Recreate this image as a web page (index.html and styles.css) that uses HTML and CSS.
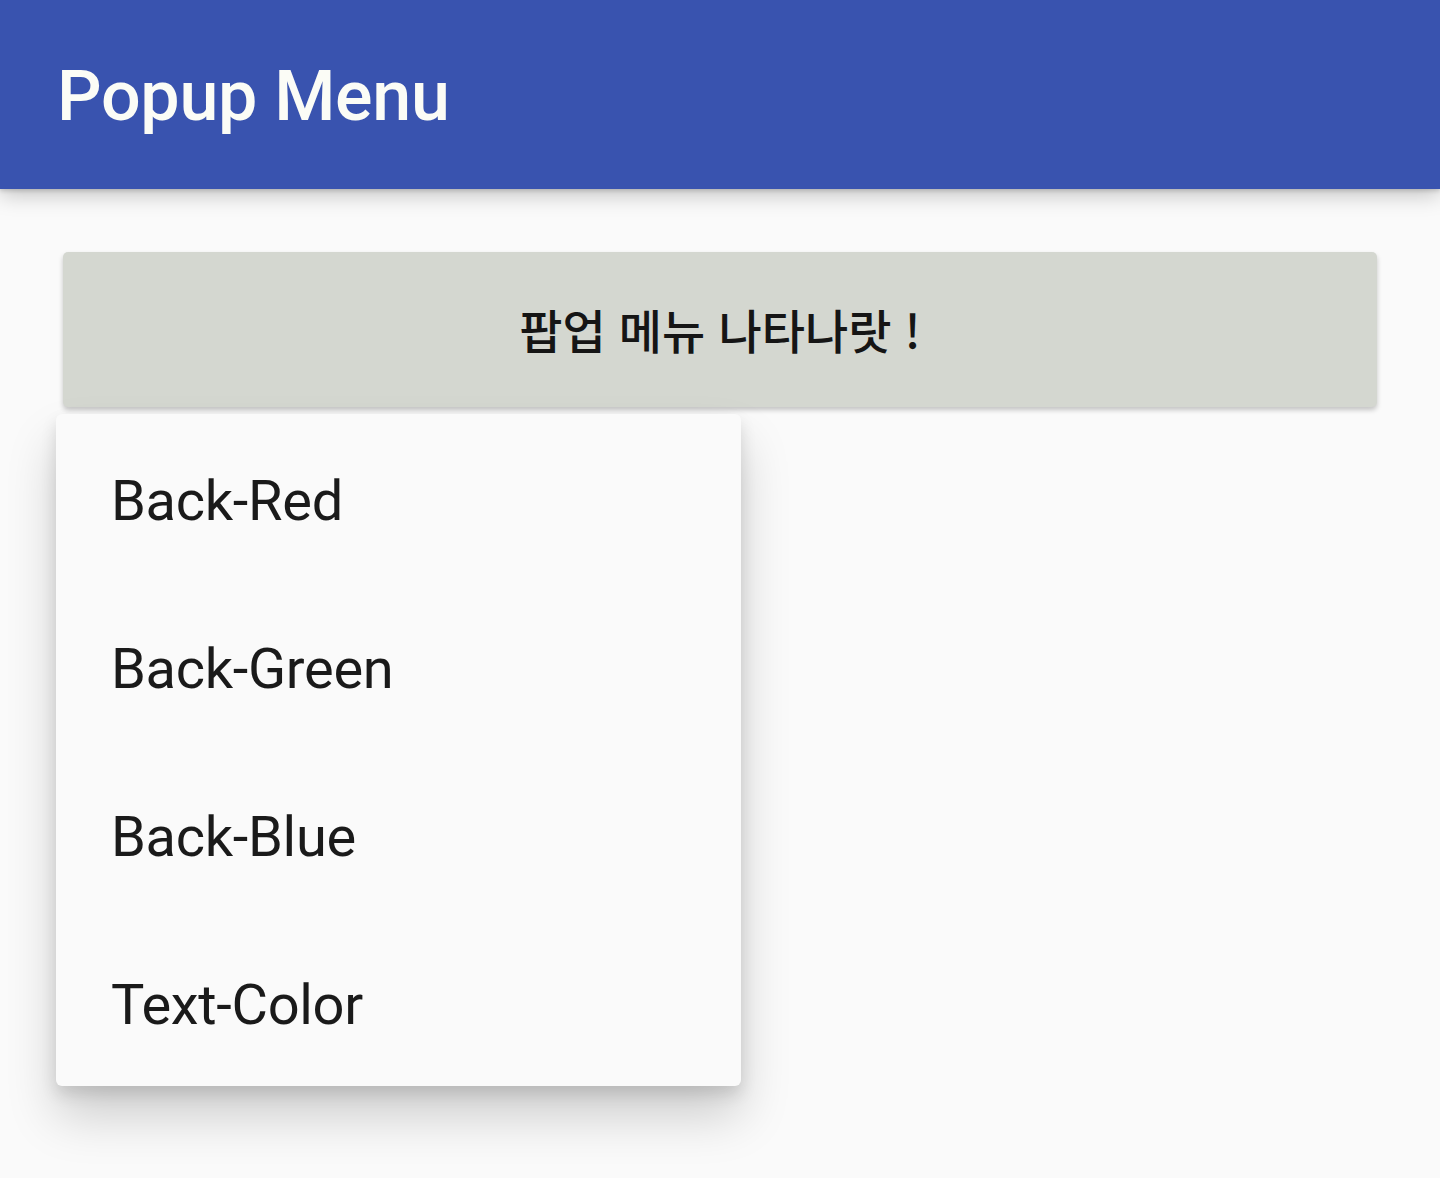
FILE: index.html
```html
<!DOCTYPE html>
<html lang="ko">
<head>
<meta charset="utf-8">
<link rel="stylesheet" href="styles.css">
</head>
<body>
<header class="appbar"><h1 class="title">Popup Menu</h1></header>
<main class="content">
  <div class="btn">팝업 메뉴 나타나랏 !</div>
  <ul class="menu">
    <li class="item">Back-Red</li>
    <li class="item">Back-Green</li>
    <li class="item">Back-Blue</li>
    <li class="item">Text-Color</li>
  </ul>
</main>
</body>
</html>
```
FILE: styles.css
```css
html, body { margin: 0; padding: 0; }
body {
  width: 1440px;
  height: 1178px;
  background: #fafafa;
  font-family: Roboto, "Noto Sans CJK KR", sans-serif;
  overflow: hidden;
}
.appbar {
  height: 189px;
  background: #3953af;
  display: flex;
  align-items: center;
  padding-left: 57px;
  box-shadow: 0 6px 20px rgba(0,0,0,0.22), 0 2px 4px rgba(0,0,0,0.15);
  position: relative;
  z-index: 2;
}
.title {
  margin: 0;
  margin-top: 2px;
  color: #fbfcf6;
  font-size: 70px;
  font-weight: 500;
  letter-spacing: -0.3px;
}
.content {
  padding: 63px 63px 0 56px;
  display: flex;
  flex-direction: column;
}
.btn {
  margin-left: 7px;
  height: 155px;
  background: #d4d7d0;
  border-radius: 5px;
  box-shadow: 0 3px 5px rgba(0,0,0,0.22);
  display: flex;
  align-items: center;
  justify-content: center;
  font-family: "Noto Sans CJK KR", sans-serif;
  font-size: 47px;
  font-weight: 500;
  color: #151515;
  padding-bottom: 2px;
  box-sizing: border-box;
}
.menu {
  list-style: none;
  margin: 7px 0 0 0;
  padding: 0;
  width: 685px;
  background: #fafafa;
  border-radius: 6px;
  box-shadow: 0 30px 50px rgba(0,0,0,0.18), 0 8px 16px rgba(0,0,0,0.12);
}
.item {
  height: 168px;
  display: flex;
  align-items: center;
  padding-left: 55px;
  padding-top: 6px;
  font-size: 56px;
  letter-spacing: -0.3px;
  color: #1a1a1a;
  box-sizing: border-box;
}
```
